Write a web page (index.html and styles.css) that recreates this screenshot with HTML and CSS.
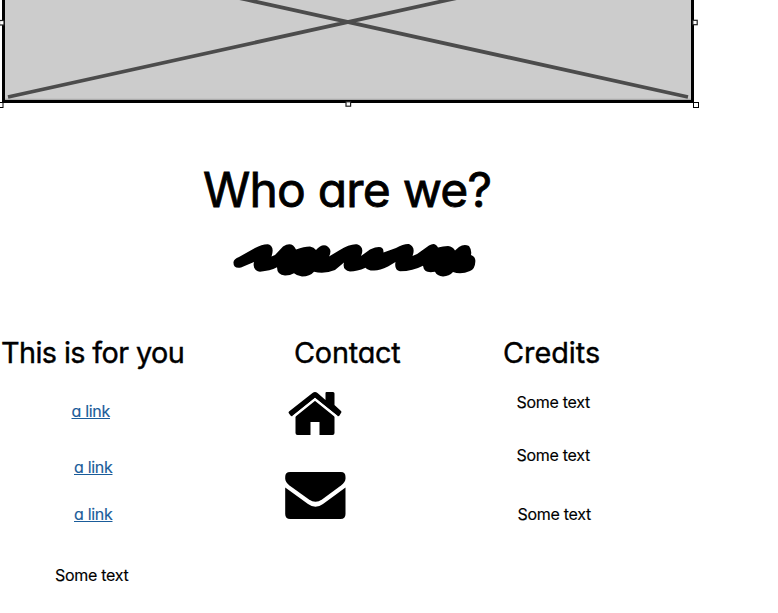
FILE: index.html
```html
<!DOCTYPE html>
<html lang="en">
<head>
<meta charset="utf-8">
<title>Who are we?</title>
<link rel="stylesheet" href="styles.css">
</head>
<body>
<svg class="placeholder" viewBox="0 0 778 110" width="778" height="110">
  <rect x="3.5" y="-60" width="689" height="161.500" fill="#ccc" stroke="#000" stroke-width="3"/>
  <path d="M5 99.300H691" stroke="#999" stroke-width=".8"/>
  <path d="M8 97L448 0L475 -6M688 97L248 0L221 -6" fill="none" stroke="#4c4c4c" stroke-width="3.800"/>
  <g fill="#fff" stroke="#222" stroke-width="1.200">
    <rect x="-.5" y="20.500" width="4.500" height="4.500"/>
    <rect x="692.800" y="20.300" width="4.400" height="4.400"/>
    <rect x="346" y="101.800" width="4.600" height="4.400"/>
    <rect x="-2" y="102.500" width="5" height="5" stroke="#000" stroke-width="1"/>
    <rect x="693.500" y="102.500" width="5" height="5" stroke="#000" stroke-width="1"/>
  </g>
</svg>
<h1 class="title">Who are we?</h1>
<svg class="scribble" viewBox="230 240 250 40" width="250" height="40">
  <path d="M233.500 262Q234 259 239 257L255 248Q262 244 268 244.200Q275 246 271.500 256.500L275 255L283 246.500Q292 241 296 249.500Q304 246.500 310 246.500Q314 247 316 250Q321 244 326 245.500Q333 249 329 256.500L339 250.500Q350 243.500 357 244.200Q365 247 361 256L370 249.500Q384 243.500 383.500 252.500L396 248Q404 243.500 409 244Q416 247 412.500 256Q418 254 422 250.500L429 245.500Q435 241.500 438 247.500Q443 246 448 246Q453 246.500 455 250.500L459 247Q464 243.500 469 246Q472 250 471 255Q476 257 475.300 262Q475 269 470 271Q461 275 453 272Q449 276.500 443 276.400Q437 276 435 271.700Q424 274 423 265.700Q413 271 400 271.300Q394 270 395.500 262L388 266.500Q379 271 373 270.500Q368 270.500 365.500 267.700Q357 271.500 350 271.500Q342 270 344 262.500L335 270Q324 274.500 314 271.700Q310 276.500 302 276.500Q297 276 294 273.300Q290 275.700 285 275.600Q277 275 277 267.300Q270 271 260 271.700Q252 270 254 262L241 267.500Q233 269 233.500 262Z"/>
</svg>
<main class="columns">
  <section class="column links">
    <h2>This is for you</h2>
    <a class="first" href="#">a link</a>
    <a class="second" href="#">a link</a>
    <a class="third" href="#">a link</a>
    <p>Some text</p>
  </section>
  <section class="column contact">
    <h2>Contact</h2>
    <svg class="home" viewBox="288 391 54 45" width="54" height="45">
      <path d="M295.500 414.500L315 399L334.500 414.500V433Q334.500 435 332.500 435H319.500V422H310.500V435H297.500Q295.500 435 295.500 433Z"/>
      <path d="M325.500 400V393Q325.500 392 326.500 392H333Q334.500 392 334.500 393.500V405L341 411Q342 412 341 413L339.500 415.500Q338.500 417 337 415.800L315 398L293 415.800Q291.500 417 290.500 415.500L289 413.500Q288 412.500 289 411.500L312.500 393Q315 391.200 317.500 393Z"/>
      <path d="M293 417L315 399.300L337 417" fill="none" stroke="#fff" stroke-width="2.500"/>
    </svg>
    <svg class="mail" viewBox="285 472 61 48" width="61" height="48">
      <path d="M290 472H341Q345.500 472 345.500 477V478.500Q345.500 482 341 485.500L322 499.500Q315.500 504 309 499.500L289.500 485.500Q285.200 482 285.200 478.500V477Q285.200 472 290 472Z"/>
      <path d="M285.200 487.500Q297 496 308 504Q315.500 509.500 323 504Q334 496 345.500 487.500V514Q345.500 519 340.500 519H290.200Q285.200 519 285.200 514Z"/>
    </svg>
  </section>
  <section class="column credits">
    <h2>Credits</h2>
    <p class="first">Some text</p>
    <p class="second">Some text</p>
    <p class="third">Some text</p>
  </section>
</main>
</body>
</html>
```
FILE: styles.css
```css
* { box-sizing: border-box; }
body {
  margin: 0;
  background: #fff;
  color: #000;
  font: 400 16px/20px Inter, "Open Sans", sans-serif;
  font-feature-settings: "cv11", "ss03";
  letter-spacing: -.3px;
  white-space: nowrap;
  overflow: hidden;
}
svg { display: block; }
h1, h2, p { margin: 0; font-weight: 400; }
p, a { -webkit-text-stroke: .15px currentColor; }
.title {
  margin: 50px 0 0 203px;
  font-size: 48px;
  line-height: 60px;
  letter-spacing: -.8px;
  -webkit-text-stroke: .8px #000;
}
.scribble { margin: 20px 0 0 230px; }
.columns {
  display: grid;
  grid-template-columns: 285px 217px 276px;
  margin-top: 53px;
}
.column {
  display: flex;
  flex-direction: column;
  align-items: flex-start;
}
h2 {
  font-size: 28.8px;
  line-height: 40px;
  letter-spacing: -.2px;
  -webkit-text-stroke: .4px #000;
}
a {
  color: #1a5c9a;
  letter-spacing: -.3px;
  text-decoration: underline;
  text-decoration-thickness: 1px;
  text-underline-offset: 1px;
}
.links h2 { margin-left: 1px; letter-spacing: -.6px; }
.links .first { margin: 28px 0 0 71.5px; }
.links .second { margin: 36px 0 0 74px; }
.links .third { margin: 27px 0 0 74px; }
.links p { margin: 41px 0 0 55px; }
.contact h2 { margin-left: 9px; }
.home { margin: 18px 0 0 3px; }
.mail { margin-top: 36px; }
.credits h2 { margin-left: 1px; letter-spacing: 0; }
.credits .first { margin: 19px 0 0 14.5px; }
.credits .second { margin: 33px 0 0 14.5px; }
.credits .third { margin: 39px 0 0 15.5px; }
```
